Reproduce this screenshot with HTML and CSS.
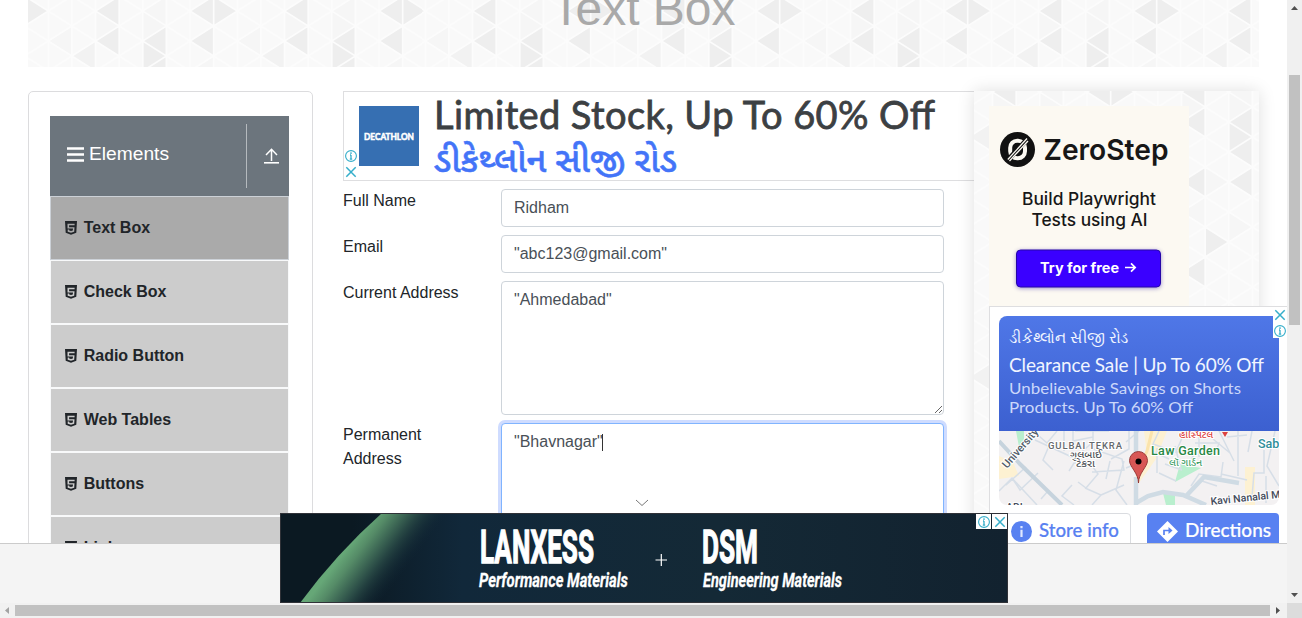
FILE: index.html
```html
<!DOCTYPE html>
<html lang="en">
<head>
<meta charset="utf-8">
<title>Text Box</title>
<link rel="stylesheet" href="styles.css">
</head>
<body>
<svg width="0" height="0" class="defs">
  <defs>
    <symbol id="html5" viewBox="0 0 12 14"><path fill="#212529" fill-rule="evenodd" d="M0 0H12L11.3 11.8 6 13.7 .7 11.800ZM2.500 2.800V7.600H8L7.800 9.500 6 10.100 4.200 9.500V8.600H2.700V10.700L6 11.800 9.200 10.700 9.500 6.200H4.100V4.200H9.600V2.800Z"/></symbol>
    <symbol id="close" viewBox="0 0 12 12"><path d="M1.3 1.3 10.7 10.7M10.7 1.3 1.3 10.7" stroke="#35aeca" stroke-width="1.5"/></symbol>
    <symbol id="info" viewBox="0 0 12 12"><circle cx="6" cy="6" r="5.4" fill="none" stroke="#35aeca" stroke-width="1.1"/><path d="M6 2.3V4M6 4.9V9.4M5 5H6M4.8 9.2H7.2" stroke="#35aeca" stroke-width="1.3"/></symbol>
  </defs>
</svg>
<div class="window">
  <div class="viewport">
    <main class="page">
      <header class="banner triangles"><h1>Text Box</h1></header>
      <div class="columns">
        <nav class="menu">
          <div class="menu-head">
            <svg class="burger" viewBox="0 0 17 15"><path d="M0 1.5H17M0 7.5H17M0 13.5H17" stroke="#fff" stroke-width="2.7"/></svg>
            <span>Elements</span>
            <div class="upload"><svg width="15" height="16" viewBox="0 0 15 16"><path d="M7.5 13V2M2 7 7.5 1.3 13 7" fill="none" stroke="#fff" stroke-width="1.5"/><path d="M0 14.8H15" stroke="#fff" stroke-width="1.6"/></svg></div>
          </div>
          <ul>
            <li class="active"><svg><use href="#html5"/></svg>Text Box</li>
            <li><svg><use href="#html5"/></svg>Check Box</li>
            <li><svg><use href="#html5"/></svg>Radio Button</li>
            <li><svg><use href="#html5"/></svg>Web Tables</li>
            <li><svg><use href="#html5"/></svg>Buttons</li>
            <li><svg><use href="#html5"/></svg>Links</li>
          </ul>
        </nav>
        <section class="content">
          <div class="top-ad">
            <div class="ad-marks"><svg><use href="#info"/></svg><svg><use href="#close"/></svg></div>
            <svg class="brand" viewBox="0 0 60 60"><rect width="60" height="60" fill="#366fb2"/><text x="5" y="33.500" textLength="50" lengthAdjust="spacingAndGlyphs" class="decathlon">DECATHLON</text></svg>
            <svg class="headline" viewBox="0 0 510 88"><text x="0" y="36.500" textLength="501" class="stock">Limited Stock, Up To 60% Off</text><text x="0" y="80" textLength="243" lengthAdjust="spacingAndGlyphs" class="gujarati">ડીકેથ્લોન સીજી રોડ</text></svg>
          </div>
          <form>
            <label>Full Name</label><input value="Ridham">
            <label>Email</label><input value="&quot;abc123@gmail.com&quot;">
            <label>Current Address</label><textarea>"Ahmedabad"</textarea>
            <label>Permanent Address</label><div class="focused">"Bhavnagar"<i></i></div>
          </form>
        </section>
        <aside class="side triangles">
          <svg class="zero" viewBox="0 0 200 200">
            <rect width="200" height="200" fill="#fcf9f2"/>
            <circle cx="28.5" cy="43.5" r="17.5" fill="#111"/>
            <rect x="21.2" y="34.7" width="14.8" height="17.6" rx="7" fill="none" stroke="#fcf9f2" stroke-width="4"/>
            <path d="M18 55 39.5 32" stroke="#111" stroke-width="5"/><path d="M18.8 53.5 38 32.5M20.5 55 39 35" stroke="#fcf9f2" stroke-width="1.3"/>
            <text x="54.500" y="53.500" textLength="125" lengthAdjust="spacingAndGlyphs" class="zs-name">ZeroStep</text>
            <text x="33" y="98.500" textLength="134" lengthAdjust="spacingAndGlyphs" class="zs-copy">Build Playwright</text>
            <text x="42.500" y="119.500" textLength="116" lengthAdjust="spacingAndGlyphs" class="zs-copy">Tests using AI</text>
            <rect x="27.500" y="144" width="144" height="37" rx="4" fill="#3a00ff" stroke="#2606a8" class="zs-button"/>
            <text x="51" y="166.5" textLength="79" lengthAdjust="spacingAndGlyphs" class="zs-cta">Try for free</text>
            <path d="M136 161.5H146M142 157.3 146.2 161.5 142 165.7" fill="none" stroke="#fff" stroke-width="1.7"/>
          </svg>
          <div class="store-ad">
            <div class="store-marks"><svg><use href="#close"/></svg><svg><use href="#info"/></svg></div>
            <svg class="sale" viewBox="0 0 280 115">
              <text x="10" y="27" textLength="120" lengthAdjust="spacingAndGlyphs" class="sale-name">ડીકેથ્લોન સીજી રોડ</text>
              <text x="10" y="56" textLength="255" class="sale-title">Clearance Sale | Up To 60% Off</text>
              <text x="10" y="78" textLength="232" lengthAdjust="spacingAndGlyphs" class="sale-sub">Unbelievable Savings on Shorts</text>
              <text x="10" y="97" textLength="184" lengthAdjust="spacingAndGlyphs" class="sale-sub">Products. Up To 60% Off</text>
            </svg>
            <svg class="map" viewBox="0 0 280 74">
              <rect width="280" height="74" fill="#f3f1f2"/>
              <path d="M0 25 14 31 20 45 0 48ZM145 0H168L157 28 137 56 134 50 148 24ZM246 36H256V74H246Z" fill="#fdf1d2"/>
              <path d="M17 0H25V14L20 16ZM181 33 202 37 176 51ZM164 62H176V74H167Z" fill="#b9efce"/>
              <g fill="none" stroke="#d6dee7" stroke-width="1.5">
                <path d="M0 60 13 47 38 74M7 54 27 36M13 47 21 59 39 42M36 9 75 27 93 12M40 5 48 12 58 0M50 15 44 29 54 39M65 0V20M74 0V10L94 6M76 0H110M94 0V18L123 28 125 39 93 41M70 40 75 32H91L99 43 87 57 79 51M73 54 63 65 75 74M86 57 102 64 93 74M102 64 125 54M125 30 117 59 128 74M111 30 107 48M130 0V18L112 28M145 30 127 37M140 0 127 11M160 0 154 13 168 18M153 20 170 28M166 33 183 39M160 42 177 50M186 0 177 21H197L188 35M200 0V26M196 12H220L216 24M220 0 235 30M239 0V45M224 31 222 46 200 43 192 55M222 43 248 49M200 49 218 55M265 19V42H255L253 66M276 0 268 35 280 55M267 45V72M49 60 42 68M158 17V42M176 15 182 38M214 8 231 22M228 6 248 4M253 0 249 21"/>
                <path d="M0 10 21 33 63 74" stroke="#c6d3dd" stroke-width="4"/>
                <path d="M137 0V38M137 46V74M137 72 149 65 164 61 184 64 207 74M188 64 205 46 240 52" stroke="#cfdbe4" stroke-width="4.5"/>
                <path d="M153 0 148 20 139 40" stroke="#fbe3ac" stroke-width="3"/>
              </g>
              <text transform="translate(8 38) rotate(-49)" class="road">University Road</text>
              <text x="49" y="18" textLength="74" class="area">GULBAI TEKRA</text>
              <text x="71" y="27" textLength="32" lengthAdjust="spacingAndGlyphs" class="area-gu">ગુલબાઈ</text>
              <text x="77" y="36" textLength="19" lengthAdjust="spacingAndGlyphs" class="area-gu">ટેકરા</text>
              <text x="180" y="7" textLength="34" lengthAdjust="spacingAndGlyphs" class="hospital">હોસ્પિટલ</text>
              <path d="M223 1H229L226 6Z" fill="#dd4340"/>
              <text x="152" y="24" textLength="69" class="garden">Law Garden</text>
              <text x="170" y="35" textLength="33" lengthAdjust="spacingAndGlyphs" class="garden-gu">લૉ ગાર્ડન</text>
              <text x="259" y="17" class="sab">Sabarmati</text>
              <text transform="translate(212 74) rotate(-6)" class="kavi">Kavi Nanalal Marg</text>
              <text x="7" y="80" class="kavi">ADI</text>
              <path d="M139.5 52C139.5 42 130.5 36 130.5 29.5A9 9 0 0 1 148.500 29.500C148.500 36 139.500 42 139.500 52Z" fill="#d85755" stroke="#93312f" stroke-width=".9"/><circle cx="139.500" cy="30.500" r="3" fill="#000"/>
            </svg>
            <div class="store-actions">
              <div class="action outline"><svg viewBox="0 0 21 21"><circle cx="10.500" cy="10.500" r="10.500" fill="#5881f1"/><path d="M10.500 5V7.200M10.500 8.800V16" stroke="#dfe8ff" stroke-width="2.200"/></svg><svg class="action-label" viewBox="0 0 84 30"><text x="1" y="22" textLength="80" lengthAdjust="spacingAndGlyphs">Store info</text></svg></div>
              <div class="action solid"><svg viewBox="0 0 21 21"><path d="M10.500 0 21 10.500 10.500 21 0 10.500Z" fill="#fff"/><path d="M7 14V9.500H12" fill="none" stroke="#5881f1" stroke-width="1.700"/><path d="M11.500 6 15.500 9.500 11.500 13Z" fill="#5881f1"/></svg><svg class="action-label" viewBox="0 0 88 30"><text x="1" y="22" textLength="86" lengthAdjust="spacingAndGlyphs">Directions</text></svg></div>
            </div>
          </div>
        </aside>
      </div>
    </main>
    <div class="anchor-bar"></div>
    <svg class="chevron" viewBox="0 0 14 8"><path d="M1 1 7 6.500 13 1" fill="none" stroke="#777"/></svg>
    <div class="anchor-ad">
      <svg viewBox="0 0 728 90">
        <defs>
          <linearGradient id="night"><stop offset="0" stop-color="#0b1922"/><stop offset=".1" stop-color="#0b1922"/><stop offset=".25" stop-color="#11283a"/><stop offset=".6" stop-color="#142936"/><stop offset="1" stop-color="#12222f"/></linearGradient>
          <linearGradient id="aurora" gradientUnits="userSpaceOnUse" x1="60" y1="45" x2="107" y2="81"><stop offset="0" stop-color="#66a777"/><stop offset=".2" stop-color="#558b67"/><stop offset=".55" stop-color="#2a4b46"/><stop offset="1" stop-color="#112736" stop-opacity="0"/></linearGradient>
        </defs>
        <rect width="728" height="90" fill="url(#night)"/>
        <path d="M20 90Q56 41 102 0H230L120 90Z" fill="url(#aurora)"/>
        <rect x=".5" y=".5" width="727" height="89" fill="none" stroke="#303238"/>
        <g fill="#fff">
          <text x="200" y="49.500" textLength="114" lengthAdjust="spacingAndGlyphs" class="big">LANXESS</text>
          <text x="422" y="49.500" textLength="56" lengthAdjust="spacingAndGlyphs" class="big">DSM</text>
          <text x="199" y="74" textLength="149" lengthAdjust="spacingAndGlyphs" class="small">Performance Materials</text>
          <text x="423" y="74" textLength="139" lengthAdjust="spacingAndGlyphs" class="small">Engineering Materials</text>
        </g>
        <path d="M375.500 47H387M381.300 41V53" stroke="#fff" stroke-width="1.200"/>
      </svg>
      <div class="anchor-marks"><span><svg><use href="#info"/></svg></span><span><svg><use href="#close"/></svg></span></div>
    </div>
  </div>
  <div class="vbar"><svg viewBox="0 0 15 15"><path d="M4 10H11L7.500 6Z" fill="#505050"/></svg><div class="vtrack"><i></i></div><svg viewBox="0 0 15 15"><path d="M4 5H11L7.500 9Z" fill="#505050"/></svg></div>
  <div class="hbar"><svg viewBox="0 0 15 15"><path d="M9 4V11L5 7.500Z" fill="#a3a3a3"/></svg><div class="hthumb"></div><svg viewBox="0 0 15 15"><path d="M6 4V11L10 7.500Z" fill="#505050"/></svg></div>
  <div class="corner"></div>
</div>
</body>
</html>
```
FILE: styles.css
```css
* { box-sizing: border-box; }
body { margin: 0; overflow: hidden; font: 16px/24px "Liberation Sans", Arial, sans-serif; color: #212529; background: #fff; }
svg { display: block; flex: none; }
.defs { position: absolute; }
.window { display: grid; grid-template: 603px 15px / 1287px 15px; width: 1302px; height: 618px; }
.viewport { position: relative; overflow: hidden; }
.page { height: 543px; overflow: hidden; }
.triangles {
  background-color: #f9f9f9;
  background-image: url("data:image/svg+xml,%3Csvg xmlns='http://www.w3.org/2000/svg' width='188.6' height='240' viewBox='0 0 188.6 240'%3E%3Cpath fill='%23f6f6f6' d='M47.2 45L70.700 30V60ZM0 75L23.600 60V90ZM141.500 15L165 0V30ZM118 30L94.300 15V45ZM165 30L141.500 15V45ZM141.500 105L118 90V120ZM94.300 135L118 120V150ZM165 150L141.500 135V165Z'/%3E%3Cpath fill='%23eeeeee' d='M0 15L23.600 0V30ZM47.200 15L23.600 0V30ZM0 45L23.600 30V60ZM94.300 45L117.900 30V60ZM94.300 15L117.900 0V30ZM141.500 45L165 30V60ZM165 60L141.500 45V75ZM141.500 105L165 90V120ZM94.300 105L118 90V120ZM141.500 165L118 150V180ZM94.300 195L118 180V210ZM141.500 75L165 60V90Z'/%3E%3Cpath fill='%23f2f2f2' d='M70.700 60L94.300 45V75Z'/%3E%3Cpath fill='none' stroke='%23fcfcfc' stroke-width='1.700' d='M0 0V240M23.600 0V240M47.200 0V240M70.700 0V240M94.300 0V240M117.900 0V240M141.500 0V240M165 0V240M188.600 0V240M0 -105L188.600 15M0 -75L188.600 45M0 -45L188.600 75M0 -15L188.600 105M0 15L188.600 135M0 45L188.600 165M0 75L188.600 195M0 105L188.600 225M0 135L188.600 255M0 165L188.600 285M0 195L188.600 315M0 225L188.600 345M188.600 -105L0 15M188.600 -75L0 45M188.600 -45L0 75M188.600 -15L0 105M188.600 15L0 135M188.600 45L0 165M188.600 75L0 195M188.600 105L0 225M188.600 135L0 255M188.600 165L0 285M188.600 195L0 315M188.600 225L0 345'/%3E%3C/svg%3E");
}
.banner { height: 67px; margin: 0 28px; overflow: hidden; background-position: -26.600px -4px; }
.banner h1 { margin: -20px 0 0; text-align: center; font-size: 48px; line-height: 58px; font-weight: 400; color: #a9a9a9; }
.columns { display: flex; margin: 24px 0 0 28px; height: 600px; }
.menu { width: 285px; border: 1px solid #dcdcde; border-radius: 5px; padding: 24px 23px 0 21px; }
.menu-head { height: 80px; background: #6c757d; color: #fff; display: flex; align-items: center; padding: 0 0 0 17px; font-size: 19.200px; }
.menu-head span { margin: -5px 0 0 5px; }
.burger { width: 17px; height: 15px; margin-top: -3px; }
.upload { margin-left: auto; width: 43px; height: 64px; border-left: 1px solid #b5babe; display: flex; align-items: center; padding-left: 17px; }
.menu ul { list-style: none; margin: 0; padding: 0; }
.menu li { height: 64px; border: 1px solid #f8f9fa; background: #ccc; display: flex; align-items: center; padding: 0 0 1px 14px; font-weight: 700; }
.menu li.active { background: #aaa; border-color: #ccd1d7; }
.menu li svg { width: 12px; height: 14px; margin: 1px 6.700px 0 0; }
.content { width: 631px; margin-left: 30px; }
.top-ad { height: 90px; border: 1px solid #dedee0; border-right: 0; display: flex; align-items: flex-start; }
.ad-marks { width: 15px; padding: 58px 0 0 1px; display: flex; flex-direction: column; gap: 4px; }
.ad-marks svg { width: 12px; height: 12px; }
.brand { width: 60px; height: 60px; margin-top: 14px; }
.decathlon { font: 700 10px Lato, sans-serif; fill: #fff; stroke: #fff; stroke-width: .6; }
.headline { width: 510px; height: 88px; margin-left: 15px; }
.stock { font: 400 38px Lato, sans-serif; fill: #3c4043; stroke: #3c4043; stroke-width: .8; }
.gujarati { font: 500 34px "Noto Sans Gujarati", "Noto Sans", sans-serif; fill: #4374f8; stroke: #4374f8; stroke-width: .5; }
form { display: grid; grid-template-columns: 142px 443px; column-gap: 16px; row-gap: 8px; margin-top: 8px; grid-template-rows: 38px 38px 134px 134px; }
label { padding-right: 15px; }
input, textarea, .focused { font: inherit; color: #495057; width: 443px; height: 100%; margin: 0; border: 1px solid #ced4da; border-radius: 4px; padding: 6px 12px; background: #fff; outline: 0; }
.focused { border-color: #80b4ff; box-shadow: 0 0 0 3px #cfdcff; display: flex; }
.focused i { width: 1px; height: 17px; margin: 4px 0 0 -1px; background: #333; }
.side { width: 285px; padding: 15px 0 0 15px; background-position: -75.600px -14px; box-shadow: 0 0 16px rgba(0,0,0,.13); }
.zero { width: 200px; height: 200px; }
.zero text { font-family: Inter, sans-serif; fill: #171717; }
.zero .zs-name { font-size: 29px; font-weight: 600; }
.zero .zs-copy { font-size: 17px; font-weight: 500; }
.zs-button { filter: drop-shadow(0 1px 2px rgba(40,20,160,.45)); }
.zero .zs-cta { font-size: 14px; font-weight: 700; fill: #fff; }
.store-ad { position: relative; width: 300px; height: 290px; background: #fff; border: 1px solid #dedee0; padding: 9px; }
.store-marks { position: absolute; left: 283px; top: 0; width: 14px; height: 31px; background: #fff; display: flex; flex-direction: column; align-items: center; gap: 4px; padding-top: 2px; }
.store-marks svg { width: 12px; height: 12px; }
.sale { width: 280px; height: 115px; border-radius: 8px 0 0 0; background: linear-gradient(#4f77e7, #3c60d0); }
.sale text { font-family: Lato, sans-serif; fill: #f1f5ff; }
.sale .sale-name { font-size: 16px; }
.sale .sale-title { font-size: 19px; }
.sale .sale-sub { font-size: 16px; fill: #cbd7fa; }
.map { width: 280px; height: 74px; border-radius: 0 0 8px 8px; }
.map text { font-family: Roboto, "Noto Sans Gujarati", sans-serif; font-weight: 500; fill: #515c68; stroke: #fff; stroke-width: 2px; paint-order: stroke; }
.map .road { font-size: 11px; }
.map .area { font-size: 9.500px; fill: #65686c; }
.map .area-gu { font-size: 9px; fill: #4d5055; }
.map .hospital { font-size: 9px; fill: #dd4340; }
.map .garden { font-size: 12.500px; fill: #298846; }
.map .garden-gu { font-size: 9px; fill: #46a16a; }
.map .sab { font-size: 12.500px; fill: #308e99; }
.map .kavi { font-size: 10.500px; fill: #444b5b; }
.store-actions { display: flex; gap: 16px; margin-top: 8px; }
.action { width: 132px; height: 37px; border-radius: 4px; display: flex; padding: 8px 0 0 11px; gap: 6px; }
.action > svg:first-child { width: 21px; height: 21px; }
.action-label { width: 88px; height: 30px; margin-top: -6px; overflow: visible; }
.action-label text { font: 500 19px Lato, sans-serif; fill: #5881f1; stroke: #5881f1; stroke-width: .2; }
.outline { border: 1px solid #dadce0; padding: 7px 0 0 11px; }
.outline .action-label { width: 84px; }
.solid { background: #5881f1; padding-left: 10px; }
.solid .action-label text { fill: #fff; stroke: #fff; }
.anchor-bar { height: 60px; background: #f4f4f4; border-top: 1px solid #cbcbcb; }
.chevron { position: absolute; left: 635px; top: 499px; width: 14px; height: 8px; }
.anchor-ad { position: absolute; left: 280px; top: 513px; width: 728px; height: 90px; }
.big { font: 700 46px Roboto, sans-serif; stroke: #fff; stroke-width: 1.300; }
.small { font: italic 700 20px Roboto, sans-serif; stroke: #fff; stroke-width: .3; }
.anchor-marks { position: absolute; right: 1px; top: 1px; display: flex; gap: 1px; }
.anchor-marks span { width: 15px; height: 15px; background: #fff; display: grid; place-items: center; }
.anchor-marks svg { width: 12px; height: 12px; }
.vbar { background: #f0f0f0; display: flex; flex-direction: column; justify-content: space-between; }
.vbar svg, .hbar svg { width: 15px; height: 15px; }
.vtrack { flex: 1; padding: 60px 2px 0; }
.vtrack i { display: block; height: 250px; background: #c1c1c1; }
.hbar { background: #f1f1f1; display: flex; align-items: center; }
.hthumb { width: 1255px; height: 11px; background: #c1c1c1; }
.corner { background: #dcdcdc; }
```
